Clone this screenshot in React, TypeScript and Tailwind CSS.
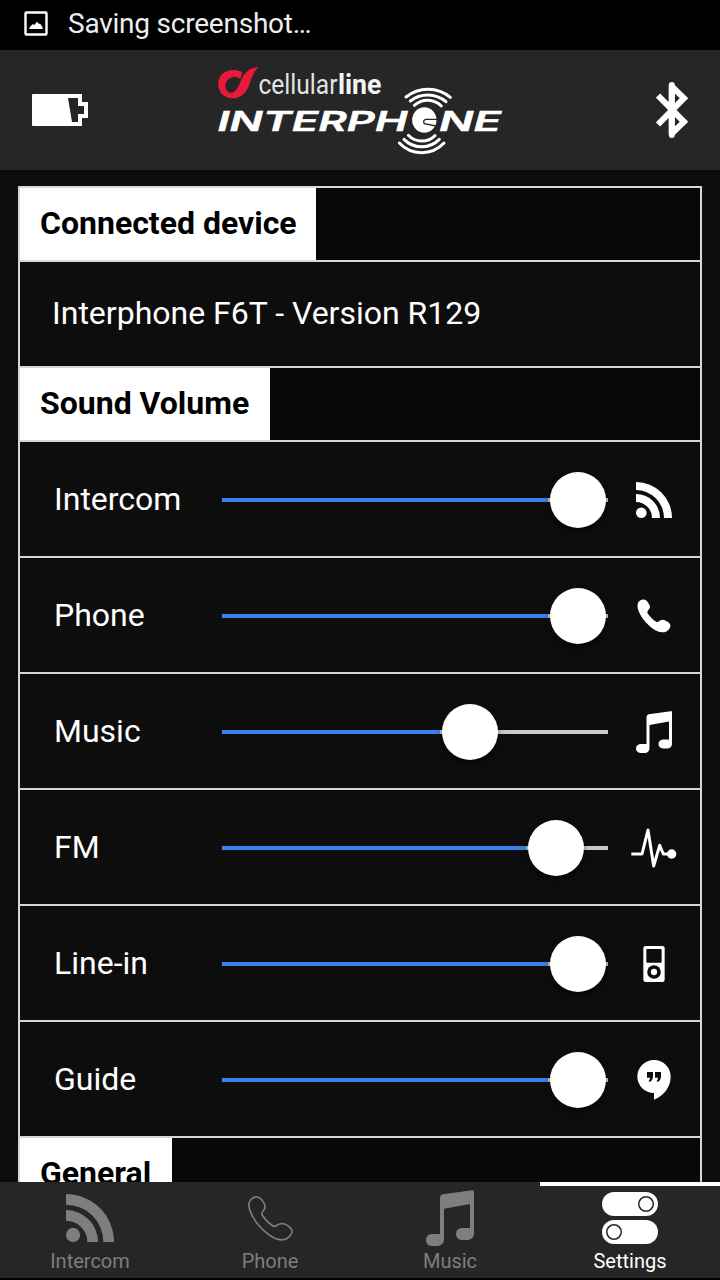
import React from "react";

type IconProps = { className?: string };

function RssIcon({ className }: IconProps) {
  return (
    <svg viewBox="0 0 36 36" className={className} fill="currentColor">
      <circle cx="5.3" cy="30.7" r="5.3" />
      <path d="M0 12A24 24 0 0 1 24 36H16A16 16 0 0 0 0 20Z" />
      <path d="M0 0A36 36 0 0 1 36 36H28A28 28 0 0 0 0 8Z" />
    </svg>
  );
}

const handsetPath =
  "M27 2C39 4 46 17 50 26C56 40 38 44 41 55C49 68 63 83 77 91C87 91 90 82 101 82C112 83 124 91 130 99C135 108 128 120 116 128C105 133 92 132 80 127C46 110 13 72 4 40C0 27 2 13 12 6C17 3 22 1 27 2Z";

function PhoneIcon({ className, outline }: IconProps & { outline?: boolean }) {
  return (
    <svg
      viewBox={outline ? "-1 -1 136 136" : "0 0 134 134"}
      className={className}
      fill={outline ? "none" : "currentColor"}
      stroke={outline ? "currentColor" : "none"}
      strokeWidth="5"
    >
      <path d={handsetPath} />
    </svg>
  );
}

function MusicIcon({ className }: IconProps) {
  return (
    <svg viewBox="0 0 144 168" className={className} fill="currentColor">
      <path d="M138 0.5Q144 0 144 6V130C144 142 136 150 124 150H108C84 150 84 114 108 114H132V42L54 56V148C54 160 46 168 34 168H18C-6 168 -6 132 18 132H42V24Q42 15 51 13Z" />
    </svg>
  );
}

function PulseIcon({ className }: IconProps) {
  return (
    <svg viewBox="0 0 138 120" className={className} fill="none" stroke="currentColor" strokeWidth="9" strokeLinejoin="round">
      <path d="M1 78H33L51 6L68 114L86 52L97 78H112" />
      <circle cx="122" cy="78" r="14" fill="currentColor" stroke="none" />
    </svg>
  );
}

function PlayerIcon({ className }: IconProps) {
  return (
    <svg viewBox="0 0 64 108" className={className}>
      <rect width="64" height="108" rx="7" fill="currentColor" />
      <rect x="9" y="9" width="46" height="41" rx="3" fill="#0d0d0d" />
      <circle cx="32" cy="78" r="20.5" fill="#0d0d0d" />
      <circle cx="32" cy="78" r="9.5" fill="currentColor" />
    </svg>
  );
}

function QuoteIcon({ className }: IconProps) {
  return (
    <svg viewBox="0 0 102 120" className={className}>
      <path d="M51 99V119C80 107 101 81 101 50A50 49.500 0 1 0 51 99Z" fill="currentColor" />
      <path d="M30 36H48V51Q47 62 39 66L35 63Q39 59 39 53H30ZM54 36H72V51Q71 62 63 66L59 63Q63 59 63 53H54Z" fill="#0d0d0d" />
    </svg>
  );
}

function TogglesIcon({ className }: IconProps) {
  return (
    <svg viewBox="0 0 56 52" className={className}>
      <rect width="56" height="24" rx="12" fill="currentColor" />
      <rect y="28" width="56" height="24" rx="12" fill="currentColor" />
      <g fill="none" stroke="#262626" strokeWidth="1.5">
        <circle cx="44" cy="12" r="7.250" />
        <circle cx="12" cy="40" r="7.250" />
      </g>
    </svg>
  );
}

function BatteryIcon() {
  return (
    <svg viewBox="0 0 57 32" className="h-8 w-[57px]" fill="#fff" fillRule="evenodd">
      <path d="M1 0H50V8H56V24H50V32H1Q0 32 0 31V1Q0 0 1 0ZM36 4L40 28H46V20H52V12H46V4Z" />
    </svg>
  );
}

function BluetoothIcon() {
  return (
    <svg viewBox="0 0 32 56" className="h-14 w-8" fill="none" stroke="#fff" strokeWidth="6" strokeMiterlimit="1.5" strokeLinecap="butt">
      <path d="M2 13.500L28 39.800L15.800 51.500V4.500L28 16.200L2 42.500" />
      <path d="M15.800 3V53" strokeLinecap="round" />
    </svg>
  );
}

function ImageIcon() {
  return (
    <svg viewBox="0 0 24 25" className="h-[25px] w-6" fill="none" stroke="#fff">
      <rect x="1.500" y="1.500" width="21" height="22" rx="1" strokeWidth="2.400" />
      <path d="M5.500 18V16.500L8.800 13L10.300 14L13 10.700L15 13L16 12.500L18.500 16V18Z" fill="#fff" stroke="none" />
    </svg>
  );
}

function Logo() {
  return (
    <svg viewBox="0 0 300 100" className="h-[100px] w-[300px]" fill="#fff">
      <path
        transform="scale(.33333)"
        fill="#e9193c"
        d="M25 75C22 50 42 30 70 30C80 29 90 32 97 37L91 57C80 47 64 49 55 58C42 70 44 94 60 98C76 100 84 84 92 64C102 38 118 23 146 22C129 36 124 60 114 84C104 106 84 116 64 115C42 113 26 97 25 75Z"
      />
      <text x="48.500" y="34" fontFamily="Roboto, sans-serif" fontSize="27" fontWeight="400" fill="#e4e4e4" textLength="79" lengthAdjust="spacingAndGlyphs">cellular</text>
      <text x="128" y="34" fontFamily="Roboto, sans-serif" fontSize="27" fontWeight="700" fill="#f4f4f4" textLength="43.500" lengthAdjust="spacingAndGlyphs">line</text>
      <g fontFamily="Inter, sans-serif" fontSize="26.500" fontWeight="600" fontStyle="italic" stroke="#fff" strokeWidth=".5">
        <text x="7.500" y="70.500" textLength="190" lengthAdjust="spacingAndGlyphs">INTERPH</text>
        <text x="229" y="70.500" textLength="62" lengthAdjust="spacingAndGlyphs">NE</text>
      </g>
      <g transform="scale(.33333)" fill="none" stroke="#fff" strokeWidth="9" strokeLinecap="round">
        <path d="M588 111A104 104 0 0 1 721 112" />
        <path d="M601 123A84 84 0 0 1 708 125" />
        <path d="M613 136A58 58 0 0 1 694 138" />
        <path d="M568 249A92 92 0 0 0 702 249" />
        <path d="M582 238A74 74 0 0 0 688 238" />
        <path d="M595 226A56 56 0 0 0 675 227" />
        <ellipse cx="643" cy="180" rx="39" ry="41" fill="#fff" stroke="#262626" strokeWidth="5" />
        <path d="M682 178H648Q637 181 643 191L678 198M666 216Q665 208 680 206" stroke="#262626" strokeWidth="4" />
      </g>
    </svg>
  );
}

function SectionHeading({ title, width }: { title: string; width: string }) {
  return (
    <div className="h-[74px] shrink-0 border-b-2 border-[#d6d6d4] bg-[#080808]">
      <h2 className={`${width} flex h-[72px] items-center whitespace-nowrap bg-white pb-[2px] pl-5 text-[32px] font-bold leading-none text-black`}>
        {title}
      </h2>
    </div>
  );
}

type Volume = { label: string; value: number; icon: React.ReactNode };

const volumes: Volume[] = [
  { label: "Intercom", value: 356, icon: <RssIcon className="size-9" /> },
  { label: "Phone", value: 356, icon: <PhoneIcon className="size-[34px]" /> },
  { label: "Music", value: 248, icon: <MusicIcon className="h-[42px] w-9" /> },
  { label: "FM", value: 334, icon: <PulseIcon className="h-10 w-[46px]" /> },
  { label: "Line-in", value: 356, icon: <PlayerIcon className="h-9 w-[22px]" /> },
  { label: "Guide", value: 356, icon: <QuoteIcon className="h-10 w-[34px]" /> },
];

function VolumeRow({ label, value, icon }: Volume) {
  return (
    <div className="flex h-[116px] shrink-0 items-center border-b-2 border-[#d6d6d4] pl-[34px] pt-[2px]">
      <span className="w-[168px] pb-0.5 text-[32px] leading-none">{label}</span>
      <div className="relative flex h-14 w-[386px] items-center">
        <div className="h-1 w-full bg-[#c8cac7]">
          <div className="h-full bg-[#3e7fee]" style={{ width: value - 30 }} />
        </div>
        <div
          className="absolute top-0 size-14 rounded-full bg-white shadow-[0_4px_6px_rgba(0,0,0,0.5)]"
          style={{ left: value - 28 }}
        />
      </div>
      <div className="flex w-[92px] justify-center">{icon}</div>
    </div>
  );
}

const tabs = [
  { label: "Intercom", icon: <RssIcon className="size-12" /> },
  { label: "Phone", icon: <PhoneIcon outline className="size-[45px]" /> },
  { label: "Music", icon: <MusicIcon className="h-14 w-12" /> },
  { label: "Settings", icon: <TogglesIcon className="h-[52px] w-14" />, active: true },
];

export default function App() {
  return (
    <div className="flex h-[1280px] w-[720px] flex-col overflow-hidden bg-[#0d0d0d] font-['Roboto',sans-serif] text-white">
      <div className="flex h-[50px] shrink-0 items-center bg-black pb-[3px] pl-6">
        <ImageIcon />
        <span className="pl-5 text-[28px] leading-none tracking-[-0.23px] text-[#eee]">Saving screenshot…</span>
      </div>
      <header className="flex h-[120px] shrink-0 items-center justify-between bg-[#262626] px-8">
        <BatteryIcon />
        <div className="pr-[25px]">
          <Logo />
        </div>
        <BluetoothIcon />
      </header>
      <main className="flex min-h-0 flex-1 flex-col overflow-hidden px-[18px] pt-4">
        <section className="flex flex-col border-2 border-[#d6d6d4]">
          <SectionHeading title="Connected device" width="w-[296px]" />
          <div className="flex h-[106px] shrink-0 items-center border-b-2 border-[#d6d6d4] pb-[2px] pl-8 text-[32px] leading-none">
            Interphone F6T - Version R129
          </div>
          <SectionHeading title="Sound Volume" width="w-[250px]" />
          {volumes.map((v) => (
            <VolumeRow key={v.label} {...v} />
          ))}
          <SectionHeading title="General" width="w-[152px]" />
        </section>
      </main>
      <nav className="grid h-[98px] shrink-0 grid-cols-4 border-b-2 border-black bg-[#262626]">
        {tabs.map((t) => (
          <div
            key={t.label}
            className={`flex flex-col items-center border-t-4 ${t.active ? "border-white text-white" : "border-transparent text-[#7e7e7e]"}`}
          >
            <div className="flex h-16 items-center">{t.icon}</div>
            <span className="text-[20px] leading-[22px]">{t.label}</span>
          </div>
        ))}
      </nav>
    </div>
  );
}
